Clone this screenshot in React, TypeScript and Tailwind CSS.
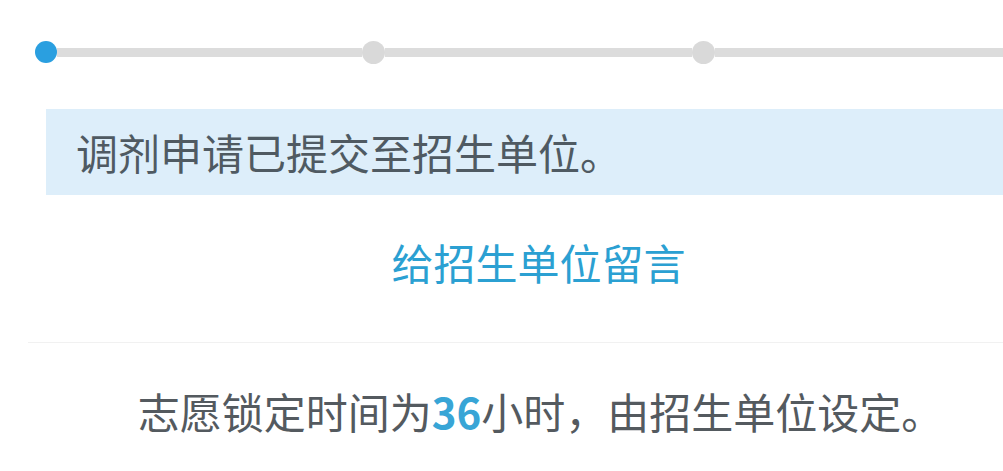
import React from "react";

export default function App() {
  const font = { fontFamily: '"Noto Sans CJK SC", "Noto Sans", sans-serif' };
  return (
    <div className="w-[1003px] h-[471px] bg-white overflow-hidden" style={font}>
      <div className="h-[104px] flex items-center pl-[35px]">
        <div className="w-[22px] h-[22px] rounded-full bg-[#2a9fe0] shrink-0" />
        <div className="w-[305px] h-[9px] bg-[#dcdcdc] shrink-0" />
        <div className="w-[23px] h-[23px] rounded-full bg-[#d9d9d9] shrink-0" />
        <div className="w-[307px] h-[9px] bg-[#dcdcdc] shrink-0" />
        <div className="w-[23px] h-[23px] rounded-full bg-[#d9d9d9] shrink-0" />
        <div className="flex-1 h-[9px] bg-[#dcdcdc]" />
      </div>
      <div className="mt-[5px] ml-[46px] h-[86px] bg-[#ddeefa] flex items-center pl-[30px]">
        <span className="text-[42px] leading-[42px] text-[#4f5a62]">调剂申请已提交至招生单位。</span>
      </div>
      <div className="h-[147px] pt-[46px] pl-[74px] text-center">
        <span className="text-[42px] leading-[42px] text-[#2ba0d2]">给招生单位留言</span>
      </div>
      <div className="ml-[28px] h-px bg-[#f1f1f1]" />
      <div className="pt-[47px] pl-[78px] text-center">
        <span className="text-[42px] leading-[42px] text-[#545a5f]">
          志愿锁定时间为<span className="font-bold text-[#38a5d6]">36</span>小时，由招生单位设定。
        </span>
      </div>
    </div>
  );
}
